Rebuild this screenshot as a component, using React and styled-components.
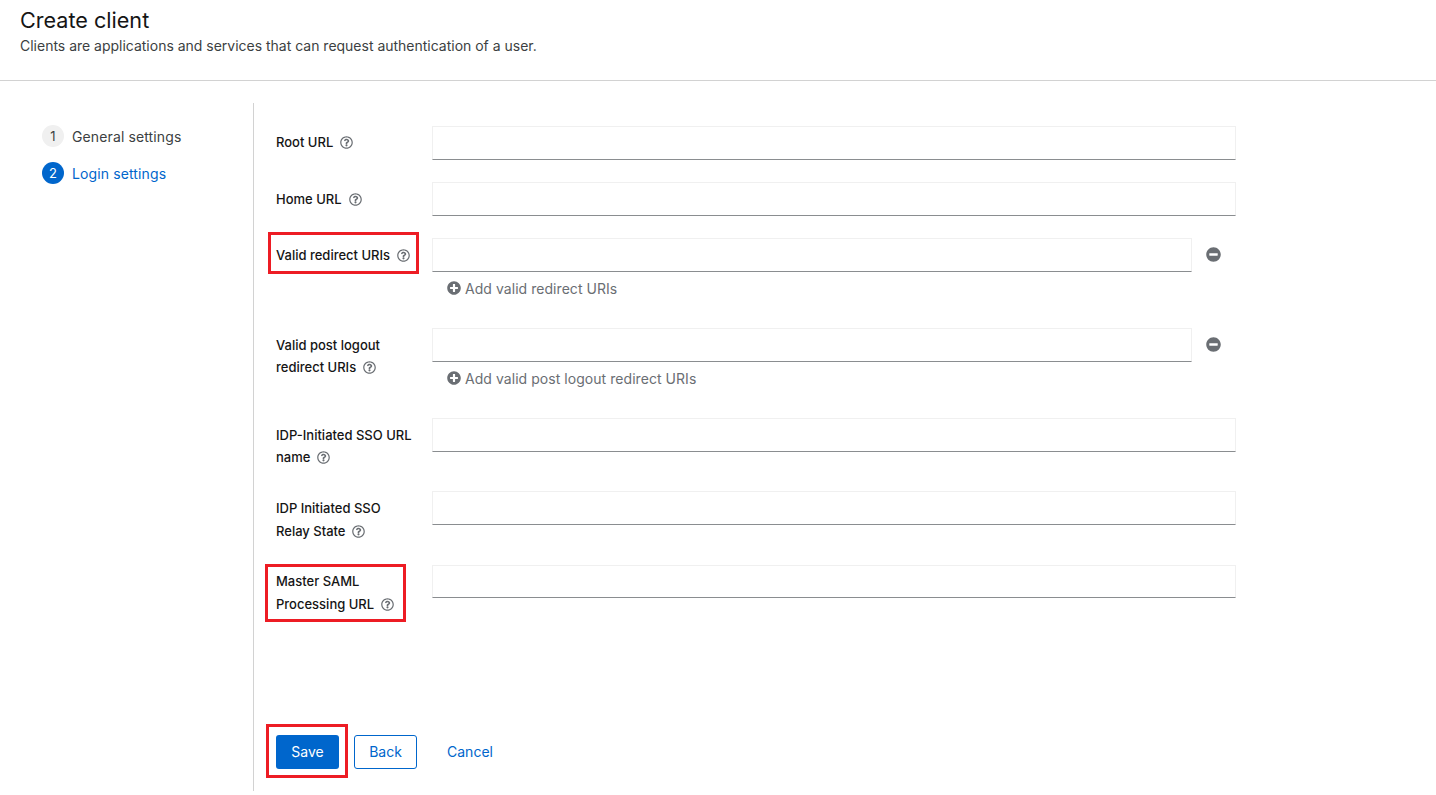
import React from 'react';
import styled, { createGlobalStyle } from 'styled-components';
import { FaRegQuestionCircle, FaPlusCircle, FaMinusCircle } from 'react-icons/fa';

const GlobalStyle = createGlobalStyle`
  html, body {
    margin: 0;
    padding: 0;
    height: 100%;
    overflow: hidden;
    background: #fff;
    font-family: "Inter", "Liberation Sans", sans-serif;
    color: #151515;
  }
  * {
    box-sizing: border-box;
  }
`;

const Page = styled.div`
  width: 1436px;
  height: 795px;
  background: #fff;
`;

const Header = styled.header`
  height: 81px;
  padding: 7px 20px 0;
  border-bottom: 1px solid #d2d2d2;
`;

const Title = styled.h1`
  margin: 0;
  font-size: 21.6px;
  line-height: 27px;
  font-weight: 400;
  color: #151515;
`;

const Subtitle = styled.p`
  margin: 1px 0 0;
  font-size: 14px;
  line-height: 21px;
  letter-spacing: -0.01px;
  color: #3c3f42;
`;

const Wizard = styled.div`
  display: flex;
  height: 688px;
  margin-top: 22px;
`;

const Nav = styled.nav`
  width: 254px;
  flex: none;
  padding: 22px 0 0 42px;
  border-right: 1px solid #d2d2d2;
`;

const Step = styled.div`
  display: flex;
  align-items: center;
  gap: 8px;
  height: 22px;
  margin-bottom: 15px;
  font-size: 14px;
  letter-spacing: 0.12px;
  color: ${(p) => (p.$active ? '#0066cc' : '#3c3f42')};
`;

const StepNumber = styled.span`
  display: flex;
  align-items: center;
  justify-content: center;
  width: 22px;
  height: 22px;
  border-radius: 50%;
  font-size: 13px;
  background: ${(p) => (p.$active ? '#0066cc' : '#f0f0f0')};
  color: ${(p) => (p.$active ? '#fff' : '#3c3f42')};
`;

const Content = styled.main`
  flex: 1;
  display: flex;
  flex-direction: column;
  padding: 23px 200px 22px 22px;
`;

const Form = styled.form`
  flex: 1;
`;

const Row = styled.div`
  display: grid;
  grid-template-columns: 156px 804px;
  align-items: start;
  min-height: ${(p) => p.$height || 34}px;
  margin-bottom: 22px;
`;

const Label = styled.div`
  position: relative;
  font-size: 13px;
  font-weight: 500;
  line-height: ${(p) => p.$lineHeight || 22}px;
  color: #151515;
  padding-top: ${(p) => p.$top ?? 6}px;
`;

const Help = styled(FaRegQuestionCircle)`
  width: 13px;
  height: 13px;
  margin-left: 7px;
  color: #6a6e73;
  vertical-align: -2px;
`;

const Highlight = styled.span`
  position: absolute;
  top: ${(p) => p.$top}px;
  left: ${(p) => p.$left}px;
  width: ${(p) => p.$width}px;
  height: ${(p) => p.$height}px;
  border: 3px solid #ed1c24;
  pointer-events: none;
`;

const TextInput = styled.input`
  display: block;
  width: 100%;
  height: ${(p) => p.$height || 34}px;
  padding: 0 8px;
  background: #fff;
  border: 1px solid #f0f0f0;
  border-bottom-color: #8a8d90;
  border-radius: 0;
  outline: none;
`;

const ListField = styled.div`
  display: flex;
  flex-direction: column;
`;

const InputLine = styled.div`
  display: grid;
  grid-template-columns: 760px 42px;
  align-items: start;
`;

const RemoveButton = styled.button`
  display: flex;
  align-items: center;
  justify-content: center;
  height: 33px;
  padding: 0;
  border: 0;
  background: none;
  color: #6a6e73;
  font-size: 15px;
`;

const AddButton = styled.button`
  display: flex;
  align-items: center;
  gap: 4px;
  height: 22px;
  margin: 5px 0 0 15px;
  padding: 0;
  border: 0;
  background: none;
  font-family: inherit;
  font-size: 14px;
  letter-spacing: 0.05px;
  color: #6a6e73;

  svg {
    width: 14px;
    height: 14px;
    flex: none;
  }
`;

const Actions = styled.div`
  display: flex;
  align-items: center;
  height: 34px;
  position: relative;
`;

const Button = styled.button`
  width: ${(p) => p.$width}px;
  height: 34px;
  padding: 0 0 1px;
  margin-right: ${(p) => p.$gap || 0}px;
  font-family: inherit;
  font-size: 14px;
  border-radius: 3px;
  color: ${(p) => (p.$variant === 'primary' ? '#fff' : '#0066cc')};
  background: ${(p) => (p.$variant === 'primary' ? '#0066cc' : '#fff')};
  border: ${(p) => (p.$variant === 'secondary' ? '1px solid #0066cc' : '0')};
`;

const HelpLabel = ({ lines, top, lineHeight, children }) => (
  <Label $top={top} $lineHeight={lineHeight}>
    {lines.map((line, i) => (
      <React.Fragment key={line}>
        {i > 0 && <br />}
        {line}
      </React.Fragment>
    ))}
    <Help />
    {children}
  </Label>
);

export default function App() {
  return (
    <Page>
      <GlobalStyle />
      <Header>
        <Title>Create client</Title>
        <Subtitle>Clients are applications and services that can request authentication of a user.</Subtitle>
      </Header>
      <Wizard>
        <Nav>
          <Step>
            <StepNumber>1</StepNumber>
            General settings
          </Step>
          <Step $active>
            <StepNumber $active>2</StepNumber>
            Login settings
          </Step>
        </Nav>
        <Content>
          <Form>
            <Row>
              <HelpLabel lines={['Root URL']} top={5} />
              <TextInput />
            </Row>
            <Row>
              <HelpLabel lines={['Home URL']} />
              <TextInput />
            </Row>
            <Row $height={68}>
              <HelpLabel lines={['Valid redirect URIs']}>
                <Highlight $top={-6} $left={-8} $width={151} $height={42} />
              </HelpLabel>
              <ListField>
                <InputLine>
                  <TextInput />
                  <RemoveButton type="button"><FaMinusCircle /></RemoveButton>
                </InputLine>
                <AddButton type="button"><FaPlusCircle />Add valid redirect URIs</AddButton>
              </ListField>
            </Row>
            <Row $height={68}>
              <HelpLabel lines={['Valid post logout', 'redirect URIs']} />
              <ListField>
                <InputLine>
                  <TextInput />
                  <RemoveButton type="button"><FaMinusCircle /></RemoveButton>
                </InputLine>
                <AddButton type="button"><FaPlusCircle />Add valid post logout redirect URIs</AddButton>
              </ListField>
            </Row>
            <Row $height={51}>
              <HelpLabel lines={['IDP-Initiated SSO URL', 'name']} />
              <TextInput />
            </Row>
            <Row $height={52}>
              <HelpLabel lines={['IDP Initiated SSO', 'Relay State']} lineHeight={23} />
              <TextInput />
            </Row>
            <Row>
              <HelpLabel lines={['Master SAML', 'Processing URL']} top={5} lineHeight={23}>
                <Highlight $top={-1} $left={-11} $width={141} $height={58} />
              </HelpLabel>
              <TextInput $height={33} />
            </Row>
          </Form>
          <Actions>
            <Highlight $top={-11} $left={-10} $width={82} $height={54} />
            <Button $variant="primary" $width={63} $gap={15}>Save</Button>
            <Button $variant="secondary" $width={63} $gap={15}>Back</Button>
            <Button $variant="link" $width={76}>Cancel</Button>
          </Actions>
        </Content>
      </Wizard>
    </Page>
  );
}
